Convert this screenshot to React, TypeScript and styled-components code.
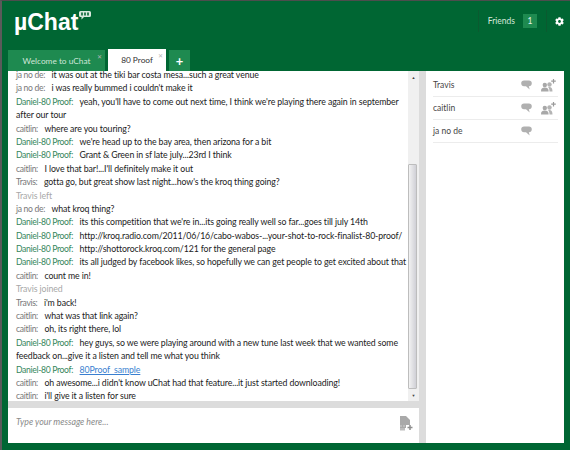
import { createGlobalStyle, styled } from 'styled-components'
import { FaCog } from 'react-icons/fa'

const GlobalStyle = createGlobalStyle`
  html, body {
    margin: 0;
    padding: 0;
    background: #006633;
  }
  body {
    font-family: Lato, "Noto Sans", sans-serif;
  }
`

type Line = { name?: string; text?: string; kind?: 'friend' | 'self' | 'status' | 'cont'; link?: string }

const D = 'Daniel-80 Proof'

const lines: Line[] = [
  { name: 'ja no de', text: 'it was out at the tiki bar costa mesa...such a great venue' },
  { name: 'ja no de', text: "i was really bummed i couldn't make it" },
  { name: D, kind: 'self', text: "yeah, you'll have to come out next time, I think we're playing there again in september" },
  { kind: 'cont', text: 'after our tour' },
  { name: 'caitlin', text: 'where are you touring?' },
  { name: D, kind: 'self', text: "we're head up to the bay area, then arizona for a bit" },
  { name: D, kind: 'self', text: 'Grant & Green in sf late july...23rd I think' },
  { name: 'caitlin', text: "I love that bar!...I'll definitely make it out" },
  { name: 'Travis', text: "gotta go, but great show last night...how's the kroq thing going?" },
  { kind: 'status', text: 'Travis left' },
  { name: 'ja no de', text: 'what kroq thing?' },
  { name: D, kind: 'self', text: "its this competition that we're in...its going really well so far...goes till july 14th" },
  { name: D, kind: 'self', text: 'http://kroq.radio.com/2011/06/16/cabo-wabos-...your-shot-to-rock-finalist-80-proof/' },
  { name: D, kind: 'self', text: 'http://shottorock.kroq.com/121 for the general page' },
  { name: D, kind: 'self', text: 'its all judged by facebook likes, so hopefully we can get people to get excited about that' },
  { name: 'caitlin', text: 'count me in!' },
  { kind: 'status', text: 'Travis joined' },
  { name: 'Travis', text: "i'm back!" },
  { name: 'caitlin', text: 'what was that link again?' },
  { name: 'caitlin', text: 'oh, its right there, lol' },
  { name: D, kind: 'self', text: 'hey guys, so we were playing around with a new tune last week that we wanted some' },
  { kind: 'cont', text: 'feedback on...give it a listen and tell me what you think' },
  { name: D, kind: 'self', link: '80Proof_sample' },
  { name: 'caitlin', text: "oh awesome...i didn't know uChat had that feature...it just started downloading!" },
  { name: 'caitlin', text: "i'll give it a listen for sure" },
]

const friends = [
  { name: 'Travis', add: true },
  { name: 'caitlin', add: true },
  { name: 'ja no de', add: false },
]

const BubbleIcon = () => (
  <svg width="11" height="10" viewBox="0 0 11 10">
    <path d="M3 .5h5c1.600 0 2.800 1 2.800 2.800S9.600 6.200 8 6.200h-.2l.9 3.300L5 6.200H3C1.400 6.200.2 5.100.2 3.300S1.400.5 3 .5z" fill="#b0b0b0" />
  </svg>
)

const AddFriendIcon = () => (
  <svg width="15" height="13" viewBox="0 0 15 13">
    <circle cx="3.800" cy="6" r="2.200" fill="#a8a8a8" />
    <path d="M0 12.500c0-3 1-4 3.800-4s3.800 1 3.800 4z" fill="#a8a8a8" />
    <circle cx="8.500" cy="5.500" r="2.200" fill="#b4b4b4" />
    <path d="M7 8c3-.5 4.500.7 4.500 4.500H8.500C8.500 10.500 8 9 7 8z" fill="#b4b4b4" />
    <path d="M12.500 0v4.500M10.200 2.200h4.600" stroke="#9a9a9a" strokeWidth="1.200" />
  </svg>
)

const AttachIcon = () => (
  <svg width="14" height="15" viewBox="0 0 14 15">
    <path d="M1 0h6l4 4v5H7v3H1z" fill="#a9a9a9" />
    <path d="M1 9h2v2H1zM4 9h2v2H4zM1 12h5v2.500H1z" fill="#bdbdbd" />
    <path d="M11 9v5M8.500 11.500h5" stroke="#8f8f8f" strokeWidth="1.500" />
  </svg>
)

const App = () => {
  return (
    <Page>
      <GlobalStyle />
      <Header>
        <Logo>
          µChat
          <LogoBubble viewBox="0 0 12 9">
            <path d="M1.500 0h9A1.500 1.500 0 0 1 12 1.500v3A1.500 1.500 0 0 1 10.500 6H5L2.500 8.500V6h-1A1.500 1.500 0 0 1 0 4.500v-3A1.500 1.500 0 0 1 1.500 0z" fill="#d8e8dd" />
            <path d="M2 1.500h2v3H2zM5 1.500h2v3H5zM8 1.500h2v3H8z" fill="#2f7d55" />
          </LogoBubble>
        </Logo>
        <HeaderRight>
          <FriendsItem>
            Friends <Count>1</Count>
          </FriendsItem>
          <Settings>
            <FaCog size={9} />
          </Settings>
        </HeaderRight>
      </Header>
      <Tabs>
        <Tab>
          Welcome to uChat
          <Close>✕</Close>
        </Tab>
        <Tab $active>
          80 Proof
          <Close>✕</Close>
        </Tab>
        <AddTab>+</AddTab>
      </Tabs>
      <Body>
        <ChatColumn>
          <LogWrap>
            <Log>
              {lines.map((l, i) => (
                <Row key={i} $status={l.kind === 'status'}>
                  {l.name && <Name $self={l.kind === 'self'}>{l.name}:</Name>}
                  {l.link ? <MsgLink>{l.link}</MsgLink> : l.text}
                </Row>
              ))}
            </Log>
            <Scrollbar>
              <ScrollArrow>▲</ScrollArrow>
              <ScrollTrack>
                <ScrollThumb />
              </ScrollTrack>
              <ScrollArrow>▼</ScrollArrow>
            </Scrollbar>
          </LogWrap>
          <InputBox>
            <Placeholder>Type your message here...</Placeholder>
            <AttachIcon />
          </InputBox>
        </ChatColumn>
        <Sidebar>
          {friends.map((f) => (
            <FriendRow key={f.name}>
              <FriendName>{f.name}</FriendName>
              <FriendIcons>
                <BubbleIcon />
                {f.add ? <AddFriendIcon /> : <IconGap />}
              </FriendIcons>
            </FriendRow>
          ))}
        </Sidebar>
      </Body>
    </Page>
  )
}

export default App

const Page = styled.div`
  width: 570px;
  height: 450px;
  box-sizing: border-box;
  background: #006633;
  border-top: 1px solid #4d4d4d;
  border-left: 2px solid #5a5a5a;
  display: flex;
  flex-direction: column;
  overflow: hidden;
`

const Header = styled.div`
  height: 48px;
  display: flex;
  justify-content: space-between;
  padding: 0 6px 0 12px;
`

const Logo = styled.div`
  position: relative;
  color: #fff;
  font-family: "Liberation Sans", sans-serif;
  font-weight: 700;
  font-size: 23px;
  line-height: 42px;
  height: 42px;
`

const LogoBubble = styled.svg`
  position: absolute;
  left: 65px;
  top: 10px;
  width: 12px;
  height: 9px;
`

const HeaderRight = styled.div`
  display: flex;
  align-items: flex-start;
  margin-top: 9px;
  color: #d5e6da;
  font-size: 8.500px;
`

const FriendsItem = styled.div`
  display: flex;
  align-items: center;
  gap: 8px;
  height: 22px;
  padding: 0 9px;
  border-left: 1px solid #0a5a30;
  border-right: 1px solid #0a5a30;
`

const Count = styled.span`
  width: 14px;
  height: 14px;
  background: #1e8a50;
  color: #e6f2ea;
  display: flex;
  align-items: center;
  justify-content: center;
`

const Settings = styled.div`
  display: flex;
  align-items: center;
  height: 22px;
  color: #fff;
  padding-left: 8px;
`

const Tabs = styled.div`
  height: 22px;
  display: flex;
  padding-left: 6px;
  gap: 3px;
  align-items: flex-end;
`

const Tab = styled.div<{ $active?: boolean }>`
  position: relative;
  box-sizing: border-box;
  width: ${(p) => (p.$active ? '58px' : '97px')};
  height: ${(p) => (p.$active ? '22px' : '21px')};
  background: ${(p) => (p.$active ? '#fff' : '#1e8a50')};
  color: ${(p) => (p.$active ? '#333' : '#cfe6d8')};
  font-size: 8.300px;
  display: flex;
  align-items: center;
  justify-content: center;
`

const Close = styled.span`
  position: absolute;
  top: 3px;
  right: 3px;
  font-size: 6px;
  line-height: 7px;
  color: #b5b5b5;
`

const AddTab = styled.div`
  box-sizing: border-box;
  width: 21px;
  height: 21px;
  background: #1e8a50;
  color: #fff;
  font-size: 13px;
  font-weight: 700;
  display: flex;
  align-items: center;
  justify-content: center;
`

const Body = styled.div`
  display: flex;
  width: 556px;
  height: 372px;
  margin-left: 6px;
  background: #dcdcdc;
`

const ChatColumn = styled.div`
  width: 411px;
  display: flex;
  flex-direction: column;
  gap: 7px;
`

const LogWrap = styled.div`
  display: flex;
  height: 330px;
  background: #fff;
`

const Log = styled.div`
  flex: 1;
  min-width: 0;
  padding-left: 8px;
  font-size: 8.750px;
  letter-spacing: -0.100px;
`

const Row = styled.div<{ $status?: boolean }>`
  line-height: 13.400px;
  height: 13.400px;
  white-space: nowrap;
  color: ${(p) => (p.$status ? '#a8a8a8' : '#222')};

  &:first-child {
    height: 10.400px;
    line-height: 7.400px;
  }
`

const Name = styled.span<{ $self?: boolean }>`
  color: ${(p) => (p.$self ? '#34865c' : '#777')};
  font-size: 8.600px;
  letter-spacing: -0.330px;
  margin-right: 6.500px;
`

const MsgLink = styled.a`
  color: #3a7fd0;
  text-decoration: underline;
`

const Scrollbar = styled.div`
  width: 11px;
  background: #f0f0f0;
  display: flex;
  flex-direction: column;
`

const ScrollArrow = styled.div`
  height: 12px;
  font-size: 4px;
  color: #444;
  display: flex;
  align-items: center;
  justify-content: center;
`

const ScrollTrack = styled.div`
  flex: 1;
  display: flex;
  flex-direction: column;
  justify-content: flex-end;
`

const ScrollThumb = styled.div`
  height: 225px;
  width: 9px;
  box-sizing: border-box;
  background: linear-gradient(to right, #f2f2f2, #d0d0d6);
  border: 1px solid #bdbdbd;
  border-radius: 1px;
`

const InputBox = styled.div`
  flex: 1;
  background: #fff;
  display: flex;
  justify-content: space-between;
  align-items: flex-start;
  padding: 8px 6px 0 8px;
`

const Placeholder = styled.div`
  color: #8a8a8a;
  font-style: italic;
  font-size: 8.800px;
`

const Sidebar = styled.div`
  width: 138px;
  margin-left: 7px;
  box-sizing: border-box;
  background: #fff;
  padding: 3px 6px 0 7px;
`

const FriendRow = styled.div`
  display: flex;
  align-items: center;
  justify-content: space-between;
  height: 23px;
  box-sizing: border-box;
  border-bottom: 1px solid #ececec;
`

const FriendName = styled.span`
  font-size: 8.500px;
  color: #444;
`

const FriendIcons = styled.div`
  display: flex;
  align-items: center;
  gap: 9px;
  padding-right: 2px;
`

const IconGap = styled.span`
  width: 15px;
`
